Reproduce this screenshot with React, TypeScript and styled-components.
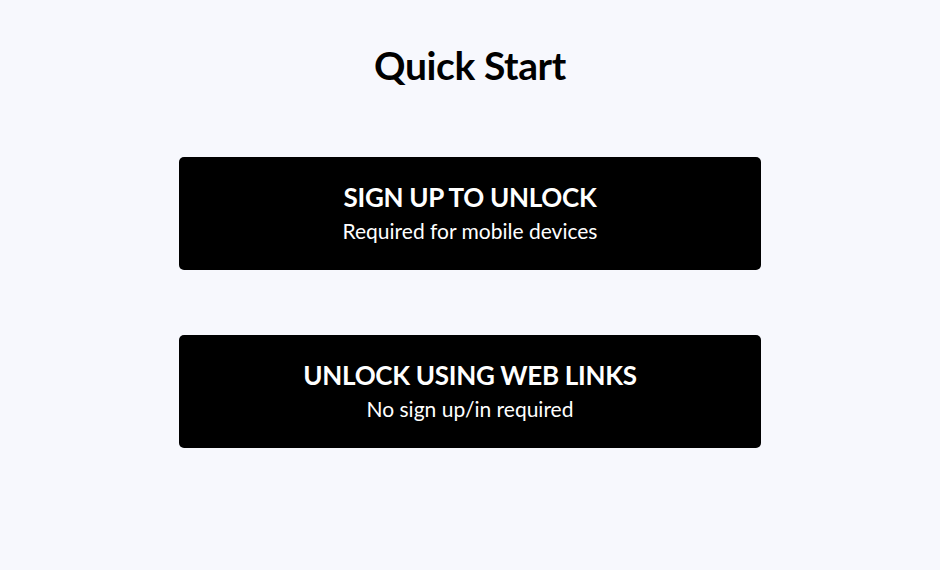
import styled, { createGlobalStyle } from "styled-components";

const GlobalStyle = createGlobalStyle`
  html, body {
    margin: 0;
    padding: 0;
    background: #f7f8fd;
    font-family: Lato, "Noto Sans", sans-serif;
  }
`;

const Page = styled.div`
  display: flex;
  flex-direction: column;
  align-items: center;
  min-height: 570px;
  padding-top: 40px;
  box-sizing: border-box;
`;

const Title = styled.h1`
  margin: 0 0 67px;
  font-size: 39px;
  line-height: 50px;
  font-weight: 700;
  letter-spacing: -0.4px;
  color: #000;
`;

const OptionList = styled.div`
  display: flex;
  flex-direction: column;
  gap: 65px;
`;

const OptionButton = styled.button`
  width: 582px;
  height: 113px;
  display: flex;
  flex-direction: column;
  align-items: center;
  justify-content: center;
  gap: 6px;
  padding: 0 0 2px;
  background: #000;
  color: #fff;
  border: none;
  border-radius: 5px;
  cursor: pointer;
  font-family: inherit;
`;

const OptionTitle = styled.span`
  font-size: 26px;
  line-height: 30px;
  font-weight: 700;
  letter-spacing: -0.3px;
  text-transform: uppercase;
`;

const OptionSubtitle = styled.span`
  font-size: 21px;
  line-height: 26px;
  font-weight: 400;
`;

const options = [
  { title: "Sign up to unlock", subtitle: "Required for mobile devices" },
  { title: "Unlock using web links", subtitle: "No sign up/in required" },
];

export default function App() {
  return (
    <>
      <GlobalStyle />
      <Page>
        <Title>Quick Start</Title>
        <OptionList>
          {options.map((o) => (
            <OptionButton key={o.title}>
              <OptionTitle>{o.title}</OptionTitle>
              <OptionSubtitle>{o.subtitle}</OptionSubtitle>
            </OptionButton>
          ))}
        </OptionList>
      </Page>
    </>
  );
}
